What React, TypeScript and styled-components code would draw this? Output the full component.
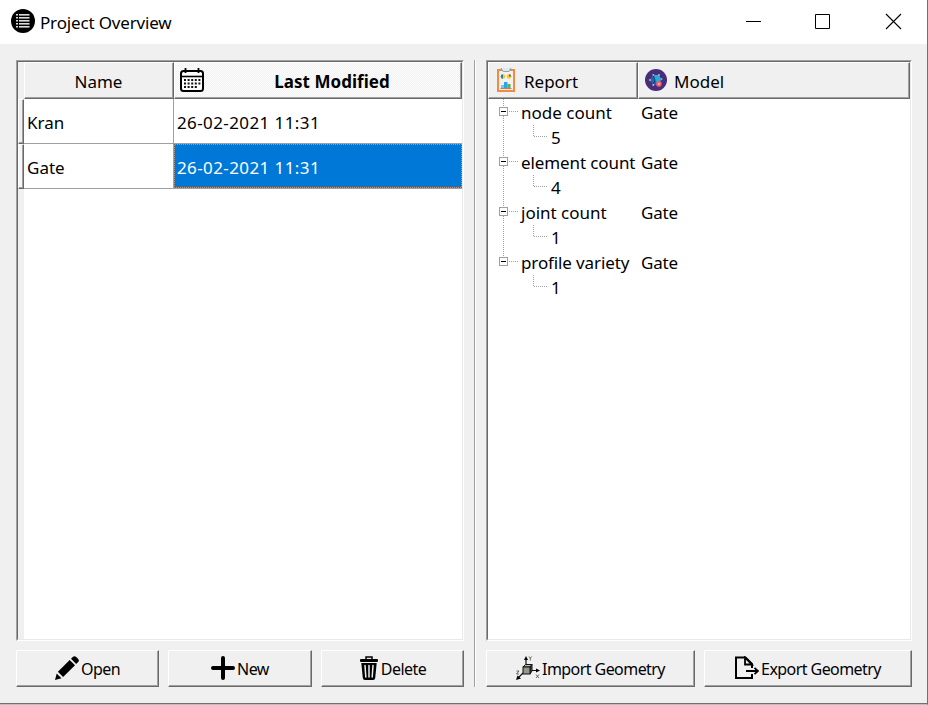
import React from "react";
import styled, { createGlobalStyle, css } from "styled-components";

const FACE = "#f0f0f0";
const SHADOW = "#a0a0a0";
const DARK = "#696969";

const GlobalStyle = createGlobalStyle`
  * { box-sizing: border-box; }
  body { margin: 0; overflow: hidden; background: #fff; }
`;

const Window = styled.div`
  width: 928px;
  height: 705px;
  display: flex;
  flex-direction: column;
  background: ${FACE};
  border-right: 1px solid #707070;
  border-bottom: 1px solid #bdbdbd;
  box-shadow: inset 0 -1px 0 #707070;
  font-family: "Noto Sans", "Open Sans", sans-serif;
  font-size: 17px;
  color: #000;
  white-space: nowrap;
  svg { display: block; flex: none; }
`;

const TitleBar = styled.header`
  height: 44px;
  flex: none;
  background: #fff;
  display: flex;
  align-items: center;
  padding: 0 25px 2px 11px;
`;

const Title = styled.h1`
  margin: 3px auto 0 5px;
  font-size: 17px;
  line-height: 24px;
  font-weight: 400;
  letter-spacing: -0.16px;
`;

const Controls = styled.div`
  display: grid;
  grid-template-columns: 69px 71px 17px;
  margin-top: 1px;
`;

const Body = styled.main`
  display: flex;
  gap: 10px;
  padding: 16px 15px 0 16px;
`;

const Column = styled.section<{ $width: number }>`
  width: ${(p) => p.$width}px;
  height: 627px;
  display: flex;
  flex-direction: column;
  gap: 9px;
`;

const Separator = styled.div`
  width: 2px;
  height: 627px;
  border-left: 1px solid ${SHADOW};
  border-right: 1px solid #fff;
`;

const Sunken = styled.div`
  height: 581px;
  border: 1px solid;
  border-color: ${SHADOW} #fff #fff ${SHADOW};
`;

const Well = styled.div`
  height: 579px;
  border: 1px solid;
  border-color: ${DARK} #e9e9e9 #e9e9e9 ${DARK};
  background: #fff;
  display: flex;
`;

const raised = css`
  border: 1px solid;
  border-color: #fff ${DARK} ${DARK} #fff;
  box-shadow: inset -1px -1px 0 ${SHADOW};
`;

const Gutter = styled.div`
  width: 6px;
  flex: none;
  background: ${FACE};
  padding-top: 37px;
`;

const GutterCell = styled.div<{ $active?: boolean }>`
  ${raised}
  height: 45px;
  background: ${(p) => (p.$active ? "#f7f7f7" : FACE)};
`;

const Sheet = styled.div`
  flex: 1;
`;

const HeaderRow = styled.div`
  display: flex;
  height: 37px;
`;

const HeaderCell = styled.div<{
  $width: number;
  $active?: boolean;
  $center?: boolean;
  $inset?: number;
}>`
  ${raised}
  width: ${(p) => p.$width}px;
  display: flex;
  align-items: center;
  justify-content: ${(p) => (p.$center ? "center" : "flex-start")};
  padding: 2px ${(p) => (p.$active ? 1 : 6)}px 0 ${(p) => p.$inset ?? 5}px;
  font-weight: ${(p) => (p.$active ? 700 : 400)};
  background: ${(p) =>
    p.$active
      ? `repeating-conic-gradient(${FACE} 0 25%, #fff 0 50%) 0 0 / 2px 2px`
      : FACE};
  svg { margin-top: -3px; }
`;

const HeaderText = styled.span<{ $gap?: number; $fill?: boolean; $spacing?: number }>`
  margin-left: ${(p) => p.$gap ?? 0}px;
  letter-spacing: ${(p) => p.$spacing ?? 0}px;
  ${(p) => p.$fill && "flex: 1; text-align: center;"}
`;

const Record = styled.div`
  display: flex;
  height: 45px;
`;

const Cell = styled.div<{ $width: number; $selected?: boolean; $last?: boolean }>`
  width: ${(p) => p.$width}px;
  display: flex;
  align-items: center;
  padding: 3px 0 0 3px;
  border-bottom: 1px solid ${SHADOW};
  ${(p) => (p.$last ? "letter-spacing: 0.4px;" : `border-right: 1px solid ${SHADOW};`)}
  ${(p) =>
    p.$selected &&
    css`
      color: #fff;
      background:
        linear-gradient(#0078d7, #0078d7) 1px 1px / calc(100% - 2px) calc(100% - 2px) no-repeat,
        repeating-conic-gradient(#ff8728 0 25%, #0078d7 0 50%) 0 0 / 2px 2px;
    `}
`;

const TreeRow = styled.div`
  display: flex;
  height: 25px;
  line-height: 27px;
`;

const Branch = styled.svg<{ $width: number }>`
  width: ${(p) => p.$width}px;
  height: 25px;
`;

const TreeLabel = styled.span<{ $width?: number; $spacing?: number }>`
  ${(p) => p.$width && `width: ${p.$width}px;`}
  letter-spacing: ${(p) => p.$spacing ?? 0}px;
`;

const ButtonRow = styled.div`
  display: flex;
  justify-content: space-between;
`;

const Button = styled.button<{ $width: number }>`
  ${raised}
  width: ${(p) => p.$width}px;
  height: 37px;
  padding: 1px 0 0;
  background: ${FACE};
  display: flex;
  align-items: center;
  justify-content: center;
  gap: 2px;
  font-family: inherit;
  font-size: 16px;
  color: #000;
  letter-spacing: -0.56px;
  svg { margin-top: -2px; }
`;

const AppIcon = () => (
  <svg width="24" height="24" viewBox="0 0 24 24">
    <circle cx="12" cy="12" r="12" />
    <g fill="#ddd">
      {[5, 8, 11, 14, 17].map((y) => (
        <React.Fragment key={y}>
          <rect x="5" y={y} width="2" height="1.5" />
          <rect x="8" y={y} width="10.5" height="1.6" />
        </React.Fragment>
      ))}
    </g>
  </svg>
);

const CalendarIcon = () => (
  <svg width="24" height="24" viewBox="0 0 24 24">
    <rect x="1" y="3" width="22" height="20" rx="2.5" fill="#fff" stroke="#000" strokeWidth="2" />
    <path d="M1 8.5H23" stroke="#000" strokeWidth="1.6" />
    <path d="M5.5 0V5M18.5 0V5" stroke="#000" strokeWidth="1.8" />
    <path d="M4 12H21M4 15.5H21M4 19H17" stroke="#111" strokeWidth="1.8" strokeDasharray="2 1.6" />
  </svg>
);

const ReportIcon = () => (
  <svg width="18" height="24" viewBox="0 0 18 24">
    <rect x="1" y="2" width="16" height="21" fill="#f3f0ef" stroke="#f08a45" strokeWidth="2" />
    <path d="M4 0L6 3.5H12L14 0" fill="#dce9ef" stroke="#84a6b5" />
    <circle cx="6" cy="8.5" r="2.3" fill="#ffc629" />
    <path d="M6 6.2A2.3 2.3 0 0 0 6 10.8Z" fill="#27839b" />
    <circle cx="12" cy="8.5" r="2.3" fill="#ffc629" />
    <path d="M12 8.5V6.2A2.3 2.3 0 0 1 14.3 8.5Z" fill="#27839b" />
    <path d="M4 20V17H7V20Z" fill="#63cfe3" />
    <path d="M7 20V14H10.5V20Z" fill="#2ba8df" />
    <path d="M10.5 20V16H13.5V20Z" fill="#58b34f" />
    <path d="M3.5 20.5H14.5" stroke="#e76e4c" />
  </svg>
);

const ModelIcon = () => (
  <svg width="22" height="22" viewBox="0 0 22 22">
    <circle cx="11" cy="11" r="11" fill="#482c7d" />
    <path d="M4.5 11L8 6H14L17 11L14 16H8Z" fill="#2463b4" />
    <path d="M9 6H14L16.5 10.5L13 14L9.5 11Z" fill="#2aa8df" />
    <path d="M8 6L10 11L8 16" fill="none" stroke="#163b80" />
    <g fill="#f4cc42">
      <circle cx="8.3" cy="5.8" r=".9" />
      <circle cx="14" cy="5.8" r=".9" />
      <circle cx="5" cy="11" r=".9" />
      <circle cx="8.3" cy="16" r=".9" />
      <circle cx="16.7" cy="10" r=".8" />
    </g>
    <circle cx="13.9" cy="14.9" r="2.8" fill="#f05a70" />
    <circle cx="13.9" cy="14.9" r="1.1" fill="#ffb27c" />
  </svg>
);

const PencilIcon = () => (
  <svg width="24" height="24" viewBox="0 0 24 24">
    <path d="M0 24L1.7 17.4L6.5 22.2Z" />
    <path d="M2.9 15.8L14.7 4.1L20 9.3L8.1 21.1Z" />
    <path d="M16 2.8L18 .8Q19.4-.4 21 .8L23.2 3Q24.6 4.6 23.2 6.1L21.2 8Z" />
  </svg>
);

const PlusIcon = () => (
  <svg width="24" height="24" viewBox="0 0 24 24">
    <path d="M12 2V22M2 12H22" stroke="#000" strokeWidth="4" strokeLinecap="round" />
  </svg>
);

const TrashIcon = () => (
  <svg width="20" height="24" viewBox="0 0 20 24">
    <path d="M7 3V1H13V3" fill="none" stroke="#000" strokeWidth="1.5" />
    <rect x="1" y="3" width="18" height="3" rx="1" />
    <path d="M2.3 7H17.7L16.2 22Q16 24 14 24H6Q4 24 3.8 22Z" />
    <path d="M6 9.5L6.8 21M10 9.5V21M14 9.5L13.2 21" stroke="#eee" strokeWidth="1.5" strokeLinecap="round" />
  </svg>
);

const AxesIcon = () => (
  <svg width="24" height="24" viewBox="0 0 24 24">
    <path d="M10 10V2M15 14.5H22M7 17L2 22" stroke="#111" strokeWidth="1.2" />
    <path d="M10 0L12 4H8ZM24 14.5L20 12.5V16.5ZM0 24L1.5 19.5L5 22.5Z" />
    <path d="M7 11L9.5 8.5H16L14 11Z" fill="#bebeb6" stroke="#111" />
    <path d="M14 11L16 8.5V15L14 18Z" fill="#55554e" stroke="#111" />
    <rect x="7" y="11" width="7" height="7" fill="#96968c" stroke="#111" />
    <path d="M13 .5L14.3 2.4L15.6 .5M14.3 2.4V4.5M20 18.5L23 22M23 18.5L20 22M.5 15H3L.5 18H3" fill="none" stroke="#444" strokeWidth=".8" />
  </svg>
);

const ExportIcon = () => (
  <svg width="24" height="24" viewBox="0 0 24 24">
    <path d="M17 12V8L10.5 1.5H1V22H17V18" fill="none" stroke="#000" strokeWidth="2" />
    <path d="M10 1.5V8.5H17Z" fill={FACE} stroke="#000" strokeWidth="1.8" />
    <path d="M11 15H23M19.5 11.8L23 15L19.5 18.2" fill="none" stroke="#000" strokeWidth="1.8" />
  </svg>
);

const dots = { stroke: "#a0a0a0", strokeDasharray: "1 1", fill: "none" };

const ParentBranch = ({ last }: { last: boolean }) => (
  <Branch $width={33} shapeRendering="crispEdges">
    <path d="M15.5 0V8" {...dots} />
    {!last && <path d="M15.5 17V25" {...dots} />}
    <rect x="11.5" y="8.5" width="8" height="8" fill="#fff" stroke="#a0a0a0" />
    <path d="M13 12.5H18" stroke="#000" />
    <path d="M21 12.5H30" {...dots} />
  </Branch>
);

const ChildBranch = ({ last }: { last: boolean }) => (
  <Branch $width={63} shapeRendering="crispEdges">
    {!last && <path d="M15.5 1V25" {...dots} />}
    <path d="M45.5 1V12.5H60" {...dots} />
  </Branch>
);

const reports = [
  { name: "node count", value: "5", spacing: 0 },
  { name: "element count", value: "4", spacing: -0.1 },
  { name: "joint count", value: "1", spacing: 0 },
  { name: "profile variety", value: "1", spacing: -0.12 },
];

export default function App() {
  return (
    <>
      <GlobalStyle />
      <Window>
        <TitleBar>
          <AppIcon />
          <Title>Project Overview</Title>
          <Controls>
            <svg width="17" height="17" viewBox="0 0 17 17"><path d="M1 8.5H16" stroke="#000" /></svg>
            <svg width="17" height="17" viewBox="0 0 17 17"><path d="M1.5 1.5H15.5V15.5H1.5Z" fill="none" stroke="#000" /></svg>
            <svg width="17" height="17" viewBox="0 0 17 17"><path d="M1 1L16 16M16 1L1 16" stroke="#000" strokeWidth="1.1" /></svg>
          </Controls>
        </TitleBar>
        <Body>
          <Column $width={448}>
            <Sunken>
              <Well>
                <Gutter>
                  <GutterCell />
                  <GutterCell $active />
                </Gutter>
                <Sheet>
                  <HeaderRow>
                    <HeaderCell $width={150} $center><HeaderText>Name</HeaderText></HeaderCell>
                    <HeaderCell $width={288} $active>
                      <CalendarIcon />
                      <HeaderText $fill $spacing={0.05}>Last Modified</HeaderText>
                    </HeaderCell>
                  </HeaderRow>
                  <Record>
                    <Cell $width={150}>Kran</Cell>
                    <Cell $width={288} $last>26-02-2021 11:31</Cell>
                  </Record>
                  <Record>
                    <Cell $width={150}>Gate</Cell>
                    <Cell $width={288} $last $selected>26-02-2021 11:31</Cell>
                  </Record>
                </Sheet>
              </Well>
            </Sunken>
            <ButtonRow>
              <Button $width={143}><PencilIcon />Open</Button>
              <Button $width={144}><PlusIcon />New</Button>
              <Button $width={143}><TrashIcon />Delete</Button>
            </ButtonRow>
          </Column>
          <Separator />
          <Column $width={426}>
            <Sunken>
              <Well>
                <Sheet>
                  <HeaderRow>
                    <HeaderCell $width={150} $inset={8}>
                      <ReportIcon />
                      <HeaderText $gap={9}>Report</HeaderText>
                    </HeaderCell>
                    <HeaderCell $width={272} $inset={6}>
                      <ModelIcon />
                      <HeaderText $gap={7}>Model</HeaderText>
                    </HeaderCell>
                  </HeaderRow>
                  {reports.map((r, i) => {
                    const last = i === reports.length - 1;
                    return (
                      <React.Fragment key={r.name}>
                        <TreeRow>
                          <ParentBranch last={last} />
                          <TreeLabel $width={120} $spacing={r.spacing}>{r.name}</TreeLabel>
                          <TreeLabel $spacing={-0.2}>Gate</TreeLabel>
                        </TreeRow>
                        <TreeRow>
                          <ChildBranch last={last} />
                          <TreeLabel>{r.value}</TreeLabel>
                        </TreeRow>
                      </React.Fragment>
                    );
                  })}
                </Sheet>
              </Well>
            </Sunken>
            <ButtonRow>
              <Button $width={209}><AxesIcon />Import Geometry</Button>
              <Button $width={208}><ExportIcon />Export Geometry</Button>
            </ButtonRow>
          </Column>
        </Body>
      </Window>
    </>
  );
}
